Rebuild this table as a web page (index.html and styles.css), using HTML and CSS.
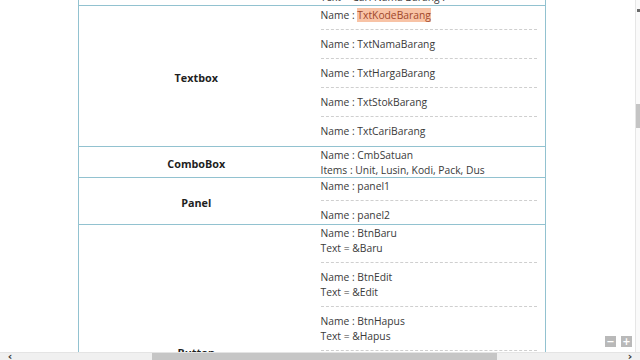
FILE: index.html
```html
<!DOCTYPE html>
<html>
<head>
<meta charset="utf-8">
<link rel="stylesheet" href="styles.css">
</head>
<body>
<div class="viewer">
  <div class="doc">
    <table class="spec">
      <colgroup><col class="c1"><col class="c2"></colgroup>
      <tr>
        <td class="label">Label</td>
        <td class="props">
          <div class="item last">Name : lblCari<br>Text = Cari Nama Barang :</div>
        </td>
      </tr>
      <tr>
        <td class="label">Textbox</td>
        <td class="props">
          <div class="item first">Name : <span class="hl">TxtKodeBarang</span></div>
          <div class="item">Name : TxtNamaBarang</div>
          <div class="item">Name : TxtHargaBarang</div>
          <div class="item">Name : TxtStokBarang</div>
          <div class="item last tail">Name : TxtCariBarang</div>
        </td>
      </tr>
      <tr>
        <td class="label">ComboBox</td>
        <td class="props">
          <div class="item flush">Name : CmbSatuan<br>Items : Unit, Lusin, Kodi, Pack, Dus</div>
        </td>
      </tr>
      <tr>
        <td class="label">Panel</td>
        <td class="props">
          <div class="item first zero">Name : panel1</div>
          <div class="item last end">Name : panel2</div>
        </td>
      </tr>
      <tr>
        <td class="label">Button</td>
        <td class="props">
          <div class="item first zero">Name : BtnBaru<br>Text = &amp;Baru</div>
          <div class="item">Name : BtnEdit<br>Text = &amp;Edit</div>
          <div class="item">Name : BtnHapus<br>Text = &amp;Hapus</div>
          <div class="item">Name : BtnSimpan<br>Text = &amp;Simpan</div>
          <div class="item">Name : BtnBatal<br>Text = &amp;Batal</div>
          <div class="item last end">Name : BtnKeluar<br>Text = &amp;Keluar</div>
        </td>
      </tr>
    </table>
  </div>

  <div class="vscroll">
    <span class="varrow"></span>
    <span class="vthumb"></span>
  </div>

  <div class="zoom">
    <span class="zbtn">&#8722;</span>
    <span class="zbtn">+</span>
  </div>

  <div class="hscroll">
    <span class="harrow">&#8249;</span>
    <div class="htrack"><span class="hthumb"></span></div>
    <span class="harrow">&#8250;</span>
  </div>
</div>
</body>
</html>
```

FILE: styles.css
```css
* { box-sizing: border-box; }
html, body {
  margin: 0;
  padding: 0;
  width: 640px;
  height: 360px;
  overflow: hidden;
  background: #ffffff;
}
.viewer {
  position: relative;
  width: 640px;
  height: 360px;
  overflow: hidden;
}
.doc {
  margin-top: -33px;
  padding-left: 78px;
}
.spec {
  border-collapse: collapse;
  width: 468px;
  table-layout: fixed;
  font-family: "Open Sans", "Noto Sans", sans-serif;
  font-size: 10.3px;
  line-height: 15px;
  color: #3a3a3a;
}
.c1 { width: 235px; }
.spec td {
  border-top: 1px solid #92c2d0;
  border-bottom: 1px solid #92c2d0;
  padding: 0;
}
.label {
  text-align: center;
  vertical-align: middle;
  font-weight: 700;
  font-size: 10.8px;
  color: #1f1f1f;
  border-left: 1px solid #92c2d0;
  padding-top: 3px !important;
}
.props {
  vertical-align: top;
  padding: 0 8px 0 7px !important;
  border-right: 1px solid #92c2d0;
}
.item {
  padding: 7px 0 6px;
  border-bottom: 1px dashed #cfcfcf;
}
.item.first { padding-top: 2px; }
.item.zero { padding-top: 1px; }
.item.last { border-bottom: 0; padding-bottom: 0; }
.item.flush { padding: 1px 0 0; border-bottom: 0; line-height: 14.5px; }
.item.tail { padding-bottom: 7px; }
.item.end { padding-bottom: 1px; }
.hl {
  background: #f8c3a6;
  color: #a0472a;
}

.vscroll {
  position: absolute;
  top: 0;
  right: 0;
  width: 5px;
  height: 352px;
  border-left: 1px solid #e6e6e6;
  background: #fafafa;
}
.varrow {
  position: absolute;
  top: 9px;
  left: 1px;
  width: 3px;
  height: 3px;
  background: #6a6a6a;
}
.vthumb {
  position: absolute;
  top: 104px;
  left: 0;
  width: 4px;
  height: 24px;
  background: #c4c4c4;
}

.zoom {
  position: absolute;
  right: 8px;
  bottom: 13px;
  display: flex;
  gap: 5px;
}
.zbtn {
  width: 11px;
  height: 11px;
  background: #b9b9b9;
  color: #ffffff;
  font-family: "DejaVu Sans", sans-serif;
  font-size: 10px;
  line-height: 11px;
  text-align: center;
  font-weight: 700;
}

.hscroll {
  position: absolute;
  left: 0;
  bottom: 0;
  width: 640px;
  height: 8px;
  background: #f0f0f0;
  border-top: 1px solid #e4e4e4;
  display: flex;
  align-items: center;
}
.harrow {
  width: 20px;
  text-align: center;
  font-family: "DejaVu Sans", sans-serif;
  font-size: 11px;
  line-height: 8px;
  color: #333;
  font-weight: 700;
}
.htrack {
  flex: 1;
  height: 7px;
  position: relative;
}
.hthumb {
  position: absolute;
  left: 132px;
  top: 0;
  width: 345px;
  height: 7px;
  background: #c6c6c6;
}
```
